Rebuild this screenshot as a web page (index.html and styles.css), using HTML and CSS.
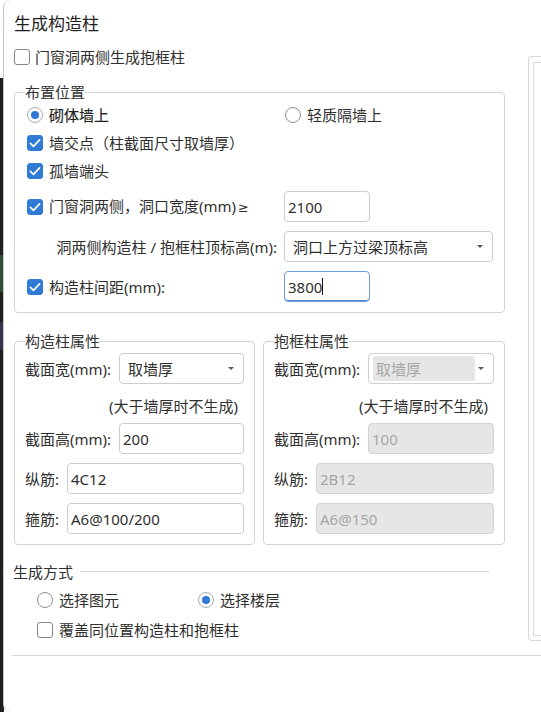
FILE: index.html
```html
<!DOCTYPE html>
<html lang="zh-CN">
<head>
<meta charset="utf-8">
<title>生成构造柱</title>
<link rel="stylesheet" href="styles.css">
</head>
<body>
<div class="window">
  <div class="top">
    <div class="main">
      <div class="title">生成构造柱</div>
      <div class="row opt-top"><span class="cb"></span><span>门窗洞两侧生成抱框柱</span></div>

      <fieldset class="group g-pos">
        <legend>布置位置</legend>
        <div class="pos-grid">
          <div class="row r28"><span class="rd on"></span><span class="strong">砌体墙上</span></div>
          <div class="row r28 col2"><span class="rd"></span><span>轻质隔墙上</span></div>
          <div class="row r28 span2"><span class="cb on"><svg viewBox="0 0 16 16"><path d="M3.4 8.3 6.5 11.3 12.6 4.9" fill="none" stroke="#fff" stroke-width="1.7" stroke-linecap="round" stroke-linejoin="round"/></svg></span><span>墙交点（柱截面尺寸取墙厚）</span></div>
          <div class="row r28 span2"><span class="cb on"><svg viewBox="0 0 16 16"><path d="M3.4 8.3 6.5 11.3 12.6 4.9" fill="none" stroke="#fff" stroke-width="1.7" stroke-linecap="round" stroke-linejoin="round"/></svg></span><span>孤墙端头</span></div>
          <div class="row r31"><span class="cb on"><svg viewBox="0 0 16 16"><path d="M3.4 8.3 6.5 11.3 12.6 4.9" fill="none" stroke="#fff" stroke-width="1.7" stroke-linecap="round" stroke-linejoin="round"/></svg></span><span>门窗洞两侧，洞口宽度(mm)<span class="ge">≥</span></span></div>
          <div class="field short">2100</div>
          <div class="row r31 label-right"><span>洞两侧构造柱 / 抱框柱顶标高(m):</span></div>
          <div class="select wide"><span>洞口上方过梁顶标高</span><i class="arrow"></i></div>
          <div class="row r31"><span class="cb on"><svg viewBox="0 0 16 16"><path d="M3.4 8.3 6.5 11.3 12.6 4.9" fill="none" stroke="#fff" stroke-width="1.7" stroke-linecap="round" stroke-linejoin="round"/></svg></span><span>构造柱间距(mm):</span></div>
          <div class="field short focus"><span>3800</span><span class="caret"></span></div>
        </div>
      </fieldset>

      <div class="props">
        <fieldset class="group g-prop">
          <legend>构造柱属性</legend>
          <div class="prow first"><span class="lbl lw">截面宽(mm):</span><div class="select"><span>取墙厚</span><i class="arrow"></i></div></div>
          <div class="caption">(大于墙厚时不生成)</div>
          <div class="prow"><span class="lbl lw">截面高(mm):</span><div class="field">200</div></div>
          <div class="prow gap"><span class="lbl ls">纵筋:</span><div class="field">4C12</div></div>
          <div class="prow gap"><span class="lbl ls">箍筋:</span><div class="field">A6@100/200</div></div>
        </fieldset>
        <fieldset class="group g-prop g-right">
          <legend>抱框柱属性</legend>
          <div class="prow first"><span class="lbl lw">截面宽(mm):</span><div class="select disabled"><span class="sel-inner">取墙厚</span><i class="arrow"></i></div></div>
          <div class="caption">(大于墙厚时不生成)</div>
          <div class="prow"><span class="lbl lw">截面高(mm):</span><div class="field disabled">100</div></div>
          <div class="prow gap"><span class="lbl ls">纵筋:</span><div class="field disabled">2B12</div></div>
          <div class="prow gap"><span class="lbl ls">箍筋:</span><div class="field disabled">A6@150</div></div>
        </fieldset>
      </div>

      <div class="sec-head"><span>生成方式</span><span class="sec-line"></span></div>
      <div class="gen">
        <div class="radio-line">
          <div class="row gen-item"><span class="rd"></span><span>选择图元</span></div>
          <div class="row gen-item"><span class="rd on"></span><span>选择楼层</span></div>
        </div>
        <div class="row gen-cb"><span class="cb"></span><span>覆盖同位置构造柱和抱框柱</span></div>
      </div>
    </div>
    <div class="side"><div class="side-inner"></div></div>
  </div>
  <div class="rule"></div>
</div>
</body>
</html>
```

FILE: styles.css
```css
* { box-sizing: border-box; }
html, body { margin: 0; padding: 0; }
body {
  width: 541px;
  height: 712px;
  overflow: hidden;
  font-family: "Noto Sans", "Noto Sans CJK SC", sans-serif;
  font-size: 15px;
  color: #2f2f2f;
  background-color: #fff;
  background-image: linear-gradient(to bottom, #fff 0 78px, #1f1f1f 78px 255px, #2f4d33 255px 292px, #1f1f1f 292px 322px, #3a3150 322px 350px, #1f1f1f 350px);
  background-repeat: no-repeat;
  background-size: 4px 100%;
}
.window {
  margin-left: 3px;
  height: 712px;
  background: #fff;
  border-left: 1px solid #c6c6c6;
  border-radius: 8px 0 0 8px;
  padding-left: 10px;
  overflow: hidden;
}
.top { display: flex; align-items: flex-start; gap: 23px; }
.main { flex: 0 0 491px; }
.title {
  padding-top: 12px;
  font-size: 17px;
  line-height: 24px;
  color: #1f1f1f;
}
.row {
  display: flex;
  align-items: center;
  gap: 6px;
  white-space: nowrap;
  line-height: 20px;
}
.opt-top { margin-top: 10px; height: 22px; gap: 5px; }
.cb {
  flex: none;
  width: 16px;
  height: 16px;
  border: 1px solid #858585;
  border-radius: 3px;
  background: #fff;
  display: flex;
}
.cb svg { width: 16px; height: 16px; margin: -1px; }
.cb.on { background: #2f7ad5; border-color: #2f7ad5; }
.rd {
  flex: none;
  width: 16px;
  height: 16px;
  border: 1px solid #8f8f8f;
  border-radius: 50%;
  background: #fff;
  display: flex;
  align-items: center;
  justify-content: center;
}
.rd.on { border-color: #a3adb9; }
.rd.on::after {
  content: "";
  width: 8px;
  height: 8px;
  border-radius: 50%;
  background: #2f7ad5;
}
.strong { -webkit-text-stroke: 0.15px #222; color: #222; }
.ge { font-family: "DejaVu Sans", sans-serif; font-size: 13px; margin-left: 2px; }

.group {
  margin: 0;
  padding: 0 10px 10px 10px;
  border: 1px solid #d3d3d3;
  border-radius: 4px;
  min-width: 0;
}
.group legend {
  padding: 0;
  font-size: 15px;
  line-height: 18px;
  color: #333;
}
.g-pos { margin-top: 15px; }
.pos-grid {
  display: grid;
  grid-template-columns: 257px 1fr;
  grid-template-rows: 28px 28px 28px 37px 40px 40px;
  padding-left: 2px;
  align-items: end;
}
.r28 { height: 28px; }
.r31 { height: 31px; }
.col2 { margin-left: 1px; }
.span2 { grid-column: 1 / span 2; }
.label-right { justify-content: flex-end; padding-right: 7px; }

.field {
  height: 31px;
  border: 1px solid #cdcdcd;
  border-radius: 4px;
  background: #fff;
  padding-left: 3px;
  display: flex;
  align-items: center;
  line-height: 20px;
  color: #2f2f2f;
  flex: 1;
  white-space: nowrap;
}
.field.short { width: 86px; }
.field.focus { border-color: #6b9fd9; box-shadow: inset 0 -1px 0 #4d8ad2; }
.caret { width: 1px; height: 17px; background: #111; margin-left: 0; }
.field.disabled { background: #e6e6e6; border-color: #d3d3d3; color: #a6a6a6; }

.select {
  position: relative;
  height: 31px;
  border: 1px solid #cdcdcd;
  border-radius: 4px;
  background: #fff;
  padding-left: 8px;
  display: flex;
  align-items: center;
  line-height: 20px;
  flex: 1;
  white-space: nowrap;
}
.select.wide { width: 209px; }
.arrow {
  position: absolute;
  right: 9px;
  top: 13px;
  width: 0;
  height: 0;
  border-left: 3px solid transparent;
  border-right: 3px solid transparent;
  border-top: 3px solid #555;
}
.select.disabled { padding: 2px 18px 2px 4px; border-color: #d0d0d0; }
.sel-inner {
  align-self: stretch;
  flex: 1;
  background: #e6e6e6;
  border-radius: 2px;
  color: #a6a6a6;
  padding-left: 3px;
  display: flex;
  align-items: center;
}

.props { display: flex; gap: 8px; margin-top: 19px; }
.g-prop { flex: 0 0 241px; }
.g-right { flex: 1 1 auto; }
.prow { display: flex; align-items: center; white-space: nowrap; }
.prow.first { margin-top: 3px; }
.prow.gap { margin-top: 9px; }
.lbl { flex: none; line-height: 20px; }
.lw { width: 94px; }
.ls { width: 42px; }
.caption {
  height: 39px;
  padding-top: 3px;
  display: flex;
  align-items: center;
  justify-content: flex-end;
  padding-right: 6px;
  white-space: nowrap;
}

.sec-head {
  margin-top: 17px;
  margin-left: -1px;
  margin-right: 16px;
  height: 20px;
  line-height: 20px;
  display: flex;
  align-items: center;
  gap: 7px;
}
.sec-line { flex: 1; border-top: 1px solid #d6d6d6; margin-top: -1px; }
.gen { padding-left: 23px; }
.radio-line { display: flex; margin-top: 7px; height: 22px; }
.gen-item { width: 161px; }
.gen-cb { margin-top: 8px; height: 22px; }

.side {
  flex: 1;
  margin-top: 56px;
  height: 585px;
  border: 1px solid #d8d8d8;
  border-right: 0;
  border-radius: 4px 0 0 4px;
  padding: 5px 0 4px 4px;
}
.side-inner {
  height: 100%;
  border: 1px solid #dcdcdc;
  border-right: 0;
}
.rule {
  margin-top: 14px;
  margin-left: -2px;
  border-top: 1px solid #d9d9d9;
}
```
